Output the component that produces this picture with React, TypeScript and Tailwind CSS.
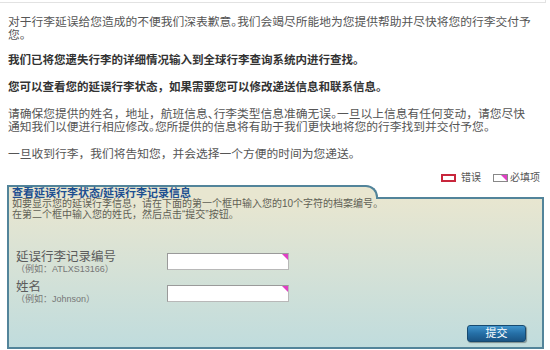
import React from "react";

function PinkCorner({ size = 6 }: { size?: number }) {
  return (
    <svg width={size} height={size} viewBox="0 0 6 6" className="absolute top-0 right-0">
      <polygon points="0,0 6,0 6,6" fill="#e03fc4" />
    </svg>
  );
}

function H({ t }: { t: string }) {
  const parts = t.split(/([。、])/);
  return (
    <>
      {parts.map((p, i) =>
        p === "。" || p === "、" ? (
          <span key={i} className="[font-feature-settings:'halt']">
            {p}
          </span>
        ) : (
          <React.Fragment key={i}>{p}</React.Fragment>
        )
      )}
    </>
  );
}

function Field({ label, example, inputMt }: { label: string; example: string; inputMt: string }) {
  return (
    <div className="flex items-start">
      <div className="w-[151px]">
        <div className="text-[12.5px] leading-[14px] text-[#5c5c5c]">{label}</div>
        <div className="text-[9px] leading-[10px] text-[#777]">{example}</div>
      </div>
      <div
        className={`relative w-[122px] h-[17px] bg-white border border-[#b8b8b8] border-t-[#9a9a9a] border-l-[#9a9a9a] ${inputMt}`}
      >
        <PinkCorner size={6} />
      </div>
    </div>
  );
}

export default function App() {
  return (
    <div className="w-[550px] h-[350px] bg-white overflow-hidden font-['Liberation_Sans','Noto_Sans_CJK_SC',sans-serif] text-[#555]">
      <div className="h-[3px] w-[546px] border-b border-r border-[#e2e2e2]" />

      <div className="px-[8px] pt-[11.5px]">
        <p className="text-[11.75px] leading-[13px] whitespace-nowrap">
          <H t="对于行李延误给您造成的不便我们深表歉意。我们会竭尽所能地为您提供帮助并尽快将您的行李交付予" />
          <br />
          <H t="您。" />
        </p>
        <p className="mt-[13.5px] text-[11.5px] leading-[13px] font-bold text-[#333] whitespace-nowrap">
          <H t="我们已将您遗失行李的详细情况输入到全球行李查询系统内进行查找。" />
        </p>
        <p className="mt-[13.5px] text-[11.5px] leading-[13px] font-bold text-[#333] whitespace-nowrap">
          <H t="您可以查看您的延误行李状态，如果需要您可以修改递送信息和联系信息。" />
        </p>
        <p className="mt-[13.5px] text-[11.75px] leading-[13px] whitespace-nowrap">
          <H t="请确保您提供的姓名，地址，航班信息、行李类型信息准确无误。一旦以上信息有任何变动，请您尽快" />
          <br />
          <H t="通知我们以便进行相应修改。您所提供的信息将有助于我们更快地将您的行李找到并交付予您。" />
        </p>
        <p className="mt-[13.5px] text-[11.75px] leading-[13px] whitespace-nowrap">
          <H t="一旦收到行李，我们将告知您，并会选择一个方便的时间为您递送。" />
        </p>
      </div>

      <div className="mt-[12px] mb-[1px] h-[12px] flex items-center justify-end pr-[10px] text-[10px] leading-[12px] text-[#555]">
        <span className="w-[15px] h-[8px] border-2 border-[#c8263c]" />
        <span className="ml-[5px]">错误</span>
        <span className="ml-[12px] relative w-[15px] h-[8px] border border-[#888]">
          <svg width="6" height="6" viewBox="0 0 6 6" className="absolute top-0 right-0">
            <polygon points="0,0 6,0 6,6" fill="#e03fc4" />
          </svg>
        </span>
        <span className="ml-[2px]">必填项</span>
      </div>

      <div className="ml-[7px] w-[537px]">
        <div className="relative z-10 -mb-[2px] w-[371px] h-[14px] border-t-2 border-l-2 border-r-2 border-[#52849a] rounded-tr-[12px] bg-[#e8e6d0] pl-[3px]">
          <div className="text-[11px] leading-[12px] font-bold text-[#1d4f91] whitespace-nowrap">
            查看延误行李状态/延误行李记录信息
          </div>
        </div>
        <div className="h-[152px] border-2 border-[#52849a] bg-linear-to-b from-[#e8e6d0] to-[#c0dcdd] flex flex-col">
          <div className="relative z-20 -mt-[1px] pl-[3px] text-[10px] leading-[11px] text-[#5f5f55] whitespace-nowrap">
            <H t="如要显示您的延误行李信息，请在下面的第一个框中输入您的10个字符的档案编号。" />
            <br />
            <H t="在第二个框中输入您的姓氏，然后点击“提交”按钮。" />
          </div>
          <div className="mt-[30px] pl-[7px] flex flex-col gap-[6px]">
            <Field label="延误行李记录编号" example="（例如：ATLXS13166）" inputMt="mt-[3px]" />
            <Field label="姓名" example="（例如：Johnson）" inputMt="mt-[5px]" />
          </div>
          <div className="mt-auto flex justify-end pr-[16px] pb-[5px]">
            <button className="w-[59px] h-[17px] rounded-[3px] border border-[#174a70] bg-linear-to-b from-[#3f94cc] via-[#256fa6] to-[#1a5585] text-white text-[11px] leading-[15px] shadow-[1px_1px_1px_rgba(0,0,0,0.35)]">
              提交
            </button>
          </div>
        </div>
      </div>
    </div>
  );
}
